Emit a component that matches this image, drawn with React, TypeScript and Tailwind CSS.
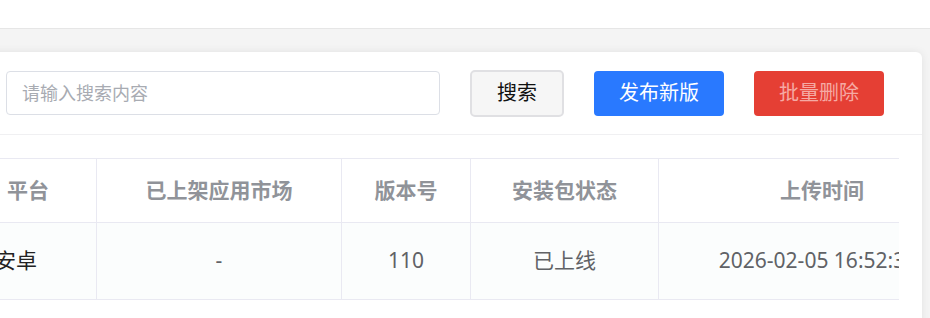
import React from "react";

const font = { fontFamily: '"Noto Sans", "Noto Sans CJK SC", sans-serif' };

export default function App() {
  const headers = ["平台", "已上架应用市场", "版本号", "安装包状态", "上传时间"];
  const row = ["安卓", "-", "110", "已上线", "2026-02-05 16:52:36"];
  return (
    <div className="w-[930px] h-[318px] overflow-hidden bg-[#f4f4f4]" style={font}>
      <div className="h-[29px] bg-white border-b border-[#e6e6e6]" />
      <div className="flex pt-[23px] pr-[8px]">
        <div className="flex-1 min-w-0 -ml-[40px] h-[300px] bg-white rounded-t-[6px] shadow-[0_0_8px_rgba(0,0,0,0.08)] flex flex-col">
          <div className="h-[83px] border-b border-[#f0f0f2] flex items-center pl-[46px]">
            <div className="w-[434px] h-[44px] border border-[#dcdfe6] rounded-[4px] flex items-center pl-[15px] text-[18px] text-[#a8abb2]">
              请输入搜索内容
            </div>
            <button className="ml-[30px] w-[94px] h-[47px] bg-[#f6f6f6] border-2 border-[#e0e0e3] rounded-[5px] text-[20px] text-[#111] flex items-center justify-center">
              搜索
            </button>
            <button className="ml-[30px] w-[130px] h-[45px] bg-[#2979ff] rounded-[4px] text-[20px] text-white flex items-center justify-center">
              发布新版
            </button>
            <button className="ml-[30px] w-[130px] h-[45px] bg-[#e53f34] rounded-[4px] text-[20px] text-[#f5aaa4] flex items-center justify-center">
              批量删除
            </button>
          </div>
          <div className="mt-[23px] mr-[23px] min-w-0 overflow-hidden">
            <div className="grid grid-cols-[137px_245px_129px_188px_326px] w-[1025px] border-t border-[#e9e9f2]">
              {headers.map((h, i) => (
                <div
                  key={h}
                  className={`h-[64px] border-b border-[#e9e9f2] flex items-center justify-center text-[21px] font-bold text-[#909399] ${i < 4 ? "border-r" : ""}`}
                >
                  {h}
                </div>
              ))}
              {row.map((c, i) => (
                <div
                  key={i}
                  className={`h-[77px] border-b border-[#e9e9f2] bg-[#fbfdfd] flex items-center justify-center text-[21px] whitespace-nowrap ${i === 0 ? "text-[#222] pr-[24px]" : "text-[#606266]"} ${i < 4 ? "border-r" : ""} ${i === 4 ? "pr-[8px]" : ""}`}
                >
                  {c}
                </div>
              ))}
            </div>
          </div>
        </div>
      </div>
    </div>
  );
}
